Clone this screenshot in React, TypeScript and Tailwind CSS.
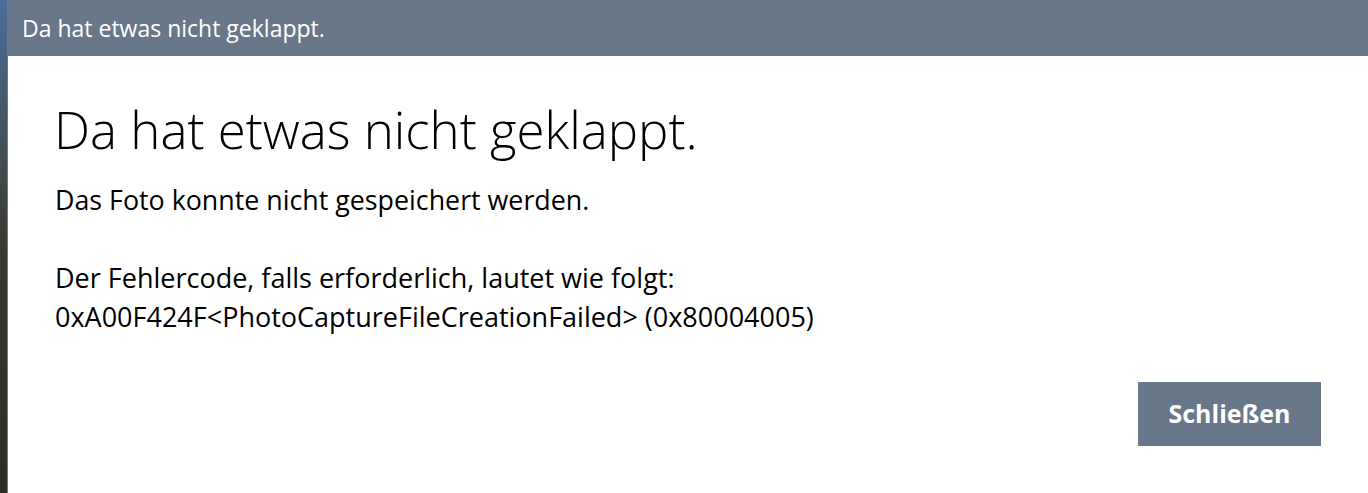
import React from 'react';

const font = { fontFamily: '"Open Sans", "Noto Sans", sans-serif' };

export default function App() {
  return (
    <div className="flex h-[493px] w-full overflow-hidden bg-white" style={font}>
      {/* sliver of the photo behind the dialog */}
      <div className="w-[7px] shrink-0 bg-gradient-to-b from-[#4a6f9a] via-[#3b3a2e] to-[#2f2c22]" />
      <div className="w-px shrink-0 bg-[#6b7a8f]" />

      <div className="flex min-w-0 flex-1 flex-col">
        <div className="flex h-[56px] shrink-0 items-center bg-[#68778a] pl-[14px] text-[23px] text-white">
          Da hat etwas nicht geklappt.
        </div>

        <div className="flex flex-1 flex-col pl-[46px] pr-[47px] text-black">
          <h1 className="mt-[41px] text-[51px] font-light leading-[64px]">
            Da hat etwas nicht geklappt.
          </h1>
          <p className="ml-[1px] mt-[19px] text-[26.8px] leading-[40px]">
            Das Foto konnte nicht gespeichert werden.
          </p>
          <p className="ml-[1px] mt-[38px] text-[27px] leading-[39px]">
            Der Fehlercode, falls erforderlich, lautet wie folgt:
            <br />
            0xA00F424F&lt;PhotoCaptureFileCreationFailed&gt; (0x80004005)
          </p>

          <div className="mt-[46px] flex justify-end">
            <button className="h-[64px] w-[183px] bg-[#68778a] text-[25px] font-bold text-white">
              Schließen
            </button>
          </div>
        </div>
      </div>
    </div>
  );
}
